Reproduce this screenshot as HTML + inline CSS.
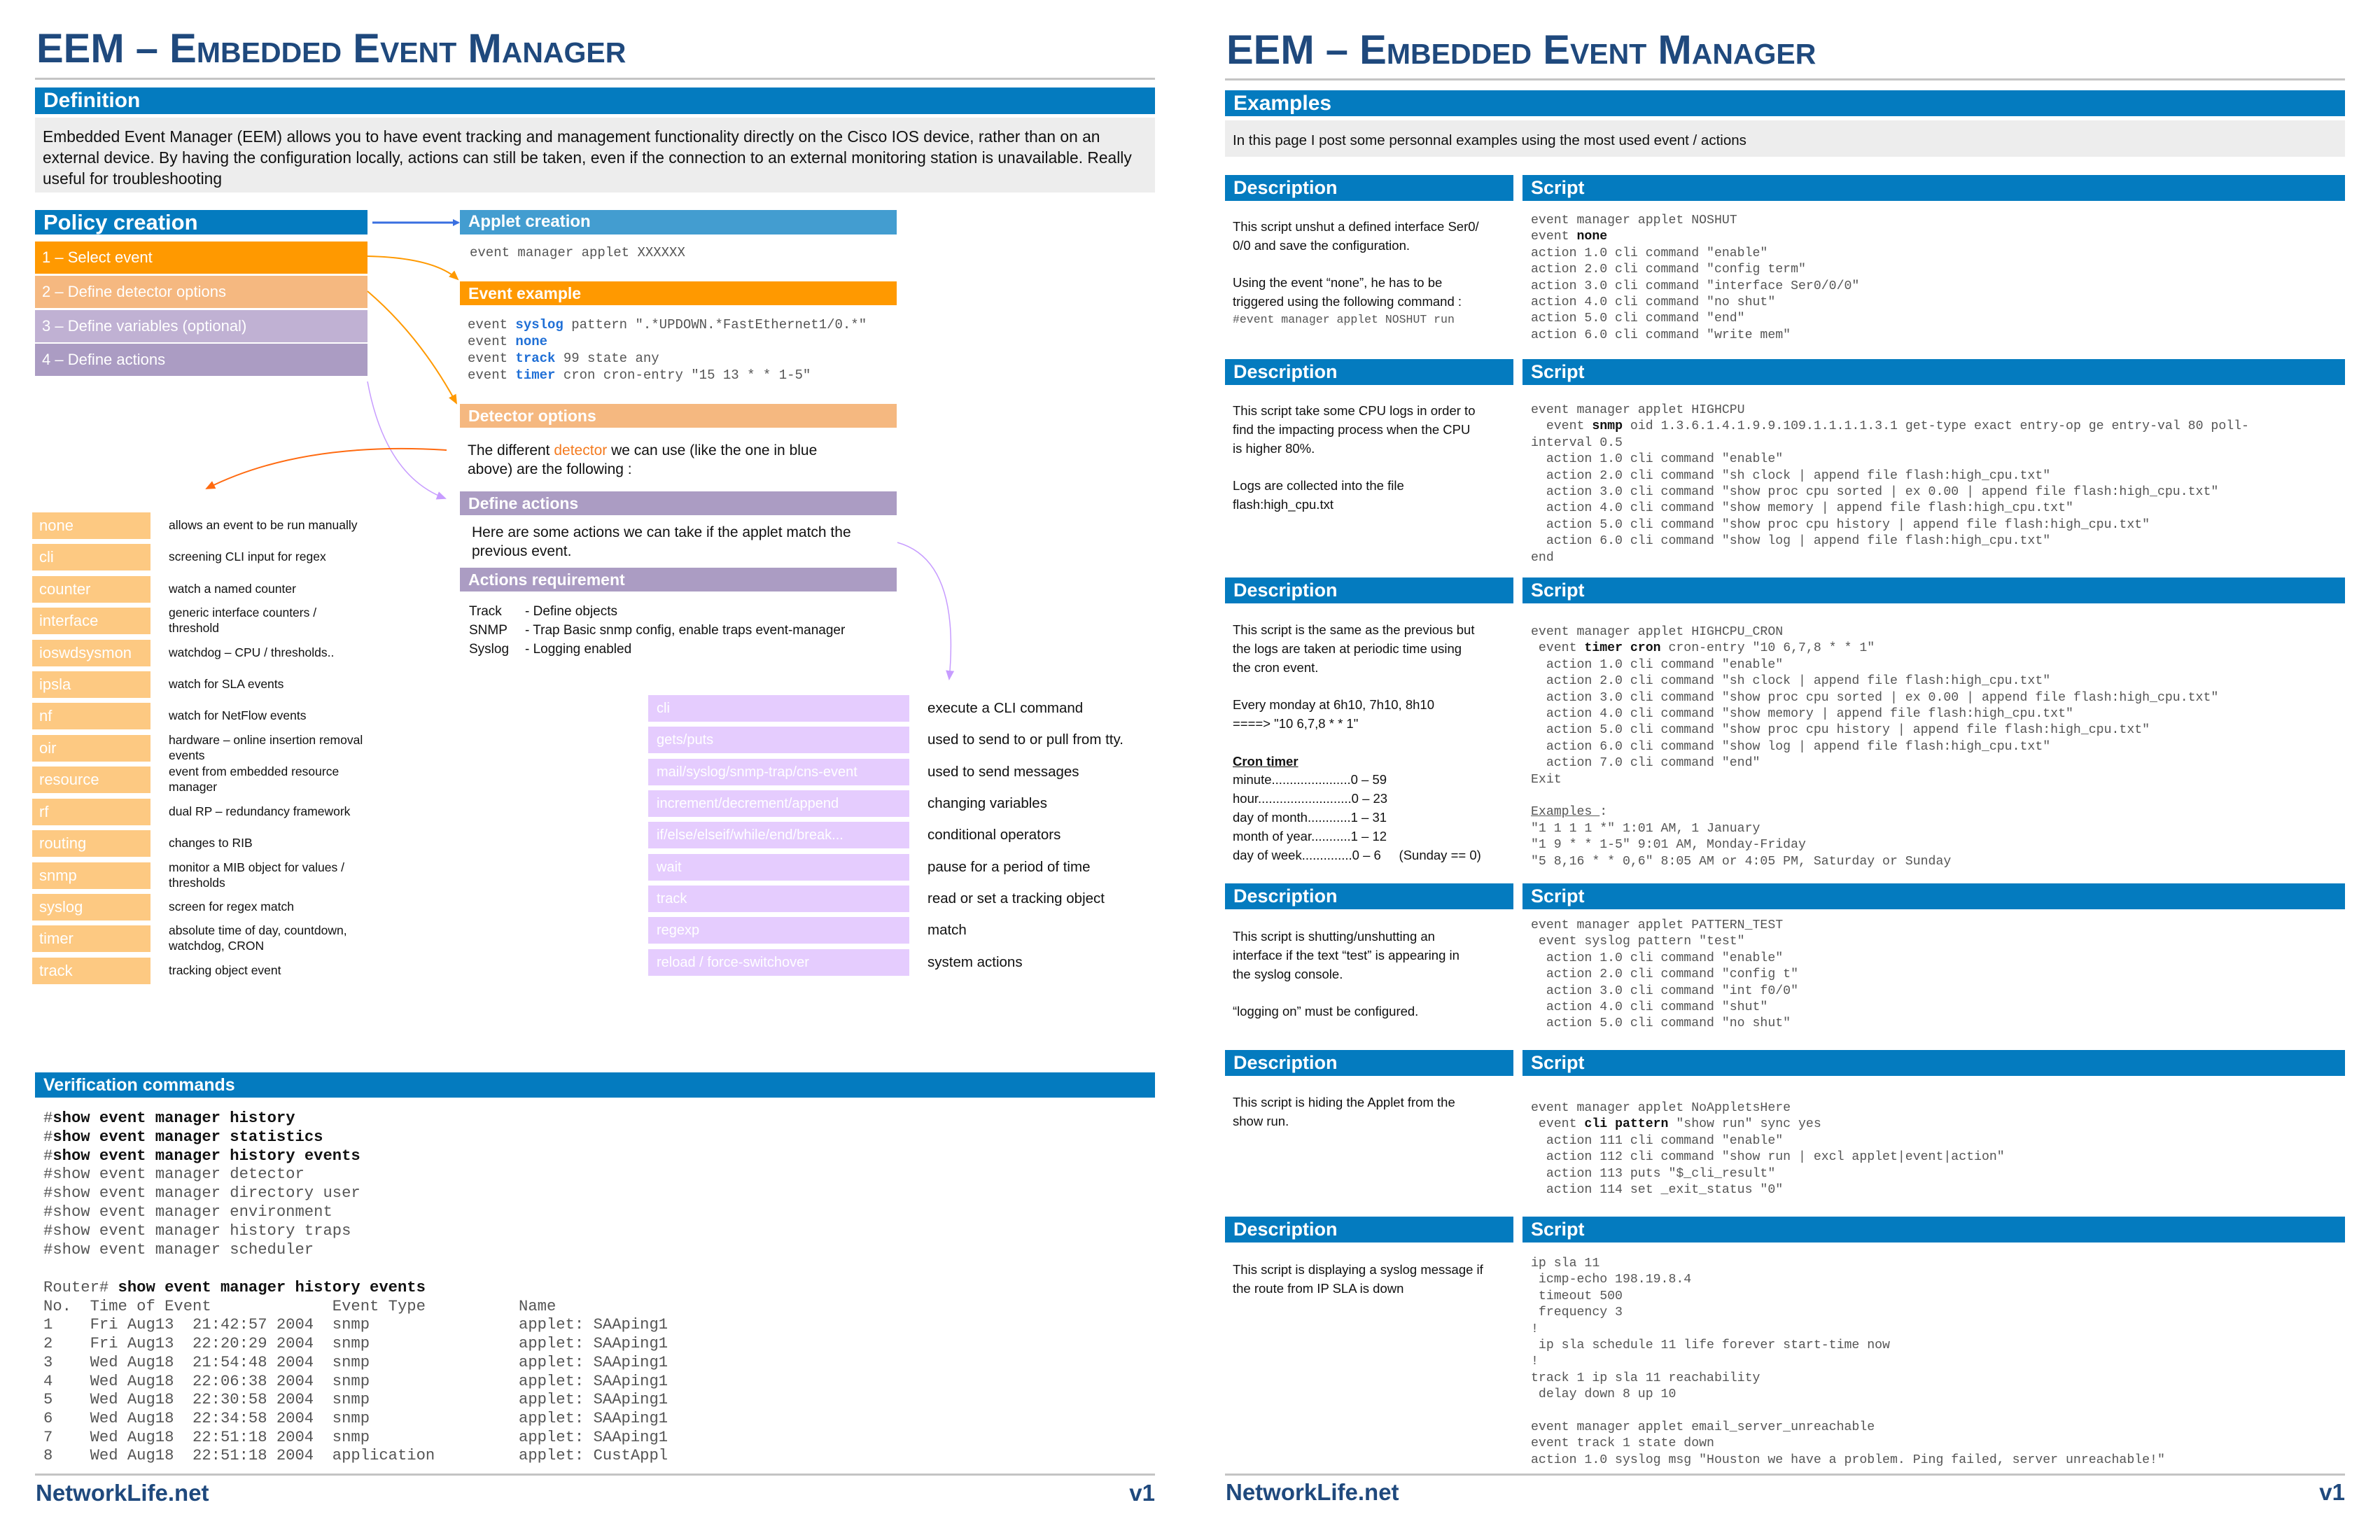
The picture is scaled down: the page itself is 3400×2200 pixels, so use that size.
<!DOCTYPE html>
<html><head><meta charset="utf-8"><style>
*{margin:0;padding:0;box-sizing:border-box}
body{width:3400px;height:2200px;background:#fff;position:relative;overflow:hidden;font-family:"Liberation Sans",sans-serif;color:#111}
.a{position:absolute;white-space:pre}
.t{position:absolute;font-size:58px;font-weight:bold;color:#1f497d;font-variant:small-caps;line-height:64px;white-space:nowrap}
.rule{position:absolute;height:3px;background:#c4c4c4}
.bar{position:absolute;background:#047bbf;color:#fff;font-weight:bold;font-size:27px;padding-left:12px;white-space:nowrap}
.sub{position:absolute;color:#fff;font-weight:bold;font-size:23px;padding-left:12px;white-space:nowrap;line-height:34px;height:34px}
.grey{position:absolute;background:#ededed}
.m{font-family:"Liberation Mono",monospace;color:#555;position:absolute;white-space:pre}
.kb{color:#1f6fd6;font-weight:bold}
.bk{color:#111;font-weight:bold}
.ev{position:absolute;left:46px;width:169px;height:38px;background:#fdc982;color:#fff;font-size:22px;line-height:38px;padding-left:10px}
.evd{position:absolute;left:241px;font-size:17.5px;line-height:22px;color:#111}
.ac{position:absolute;left:926px;width:373px;height:38px;background:#e5ccfe;color:#fff;font-size:20px;line-height:38px;padding-left:12px;white-space:nowrap}
.acd{position:absolute;left:1325px;font-size:20.5px;color:#111;white-space:nowrap}
.step{position:absolute;left:50px;width:475px;height:46px;color:#fff;font-size:22px;line-height:46px;padding-left:10px}
.d{position:absolute;left:1761px;font-size:18.5px;line-height:26.8px;white-space:pre;color:#111}
.s{position:absolute;left:2187px;font-family:"Liberation Mono",monospace;font-size:18.2px;line-height:23.4px;white-space:pre;color:#555}
.foot{position:absolute;font-size:33px;font-weight:bold;color:#1f497d;line-height:40px}
</style></head><body>

<!-- LEFT PAGE -->
<div class="t" style="left:52px;top:38px">EEM – Embedded Event Manager</div>
<div class="rule" style="left:50px;top:111px;width:1600px"></div>
<div class="bar" style="left:50px;top:125px;width:1600px;height:38px;line-height:38px;font-size:30px">Definition</div>
<div class="grey" style="left:50px;top:168px;width:1600px;height:107px"></div>
<div class="a" style="left:61px;top:180px;font-size:22.8px;line-height:30px">Embedded Event Manager (EEM) allows you to have event tracking and management functionality directly on the Cisco IOS device, rather than on an
external device. By having the configuration locally, actions can still be taken, even if the connection to an external monitoring station is unavailable. Really
useful for troubleshooting</div>

<div class="bar" style="left:50px;top:300px;width:475px;height:35px;line-height:35px;font-size:31px">Policy creation</div>
<div class="step" style="top:345px;background:#ff9900">1 – Select event</div>
<div class="step" style="top:394px;background:#f5b880">2 – Define detector options</div>
<div class="step" style="top:443px;background:#c0b1d3">3 – Define variables (optional)</div>
<div class="step" style="top:491px;background:#ab9cc3">4 – Define actions</div>

<div class="sub" style="left:657px;top:300px;width:624px;height:35px;background:#439dd0;font-size:24px">Applet creation</div>
<div class="m" style="left:671px;top:350px;font-size:19px;line-height:22px">event manager applet XXXXXX</div>
<div class="sub" style="left:657px;top:402px;width:624px;background:#ff9900">Event example</div>
<div class="m" style="left:668px;top:452px;font-size:19px;line-height:24px">event <span class="kb">syslog</span> pattern ".*UPDOWN.*FastEthernet1/0.*"
event <span class="kb">none</span>
event <span class="kb">track</span> 99 state any
event <span class="kb">timer</span> cron cron-entry "15 13 * * 1-5"</div>
<div class="sub" style="left:657px;top:577px;width:624px;background:#f5b880">Detector options</div>
<div class="a" style="left:668px;top:630px;font-size:21px;line-height:27px">The different <span style="color:#f47b20">detector</span> we can use (like the one in blue
above) are the following :</div>
<div class="sub" style="left:657px;top:702px;width:624px;background:#ab9cc3">Define actions</div>
<div class="a" style="left:674px;top:747px;font-size:21px;line-height:27px">Here are some actions we can take if the applet match the
previous event.</div>
<div class="sub" style="left:657px;top:811px;width:624px;background:#ab9cc3">Actions requirement</div>
<div class="a" style="left:670px;top:860px;font-size:19px;line-height:27px">Track
SNMP
Syslog</div>
<div class="a" style="left:750px;top:860px;font-size:19px;line-height:27px">- Define objects
- Trap Basic snmp config, enable traps event-manager
- Logging enabled</div>

<div class="ev" style="top:732px">none</div><div class="evd" style="top:739px">allows an event to be run manually</div>
<div class="ev" style="top:777px">cli</div><div class="evd" style="top:784px">screening CLI input for regex</div>
<div class="ev" style="top:823px">counter</div><div class="evd" style="top:830px">watch a named counter</div>
<div class="ev" style="top:868px">interface</div><div class="evd" style="top:864px">generic interface counters /<br>threshold</div>
<div class="ev" style="top:914px">ioswdsysmon</div><div class="evd" style="top:921px">watchdog – CPU / thresholds..</div>
<div class="ev" style="top:959px">ipsla</div><div class="evd" style="top:966px">watch for SLA events</div>
<div class="ev" style="top:1004px">nf</div><div class="evd" style="top:1011px">watch for NetFlow events</div>
<div class="ev" style="top:1050px">oir</div><div class="evd" style="top:1046px">hardware – online insertion removal<br>events</div>
<div class="ev" style="top:1095px">resource</div><div class="evd" style="top:1091px">event from embedded resource<br>manager</div>
<div class="ev" style="top:1141px">rf</div><div class="evd" style="top:1148px">dual RP – redundancy framework</div>
<div class="ev" style="top:1186px">routing</div><div class="evd" style="top:1193px">changes to RIB</div>
<div class="ev" style="top:1232px">snmp</div><div class="evd" style="top:1228px">monitor a MIB object for values /<br>thresholds</div>
<div class="ev" style="top:1277px">syslog</div><div class="evd" style="top:1284px">screen for regex match</div>
<div class="ev" style="top:1322px">timer</div><div class="evd" style="top:1318px">absolute time of day, countdown,<br>watchdog, CRON</div>
<div class="ev" style="top:1368px">track</div><div class="evd" style="top:1375px">tracking object event</div>

<div class="ac" style="top:993px">cli</div><div class="acd" style="top:1000px">execute a CLI command</div>
<div class="ac" style="top:1038px">gets/puts</div><div class="acd" style="top:1045px">used to send to or pull from tty.</div>
<div class="ac" style="top:1084px">mail/syslog/snmp-trap/cns-event</div><div class="acd" style="top:1091px">used to send messages</div>
<div class="ac" style="top:1129px">increment/decrement/append</div><div class="acd" style="top:1136px">changing variables</div>
<div class="ac" style="top:1174px">if/else/elseif/while/end/break...</div><div class="acd" style="top:1181px">conditional operators</div>
<div class="ac" style="top:1220px">wait</div><div class="acd" style="top:1227px">pause for a period of time</div>
<div class="ac" style="top:1265px">track</div><div class="acd" style="top:1272px">read or set a tracking object</div>
<div class="ac" style="top:1310px">regexp</div><div class="acd" style="top:1317px">match</div>
<div class="ac" style="top:1356px">reload / force-switchover</div><div class="acd" style="top:1363px">system actions</div>

<svg style="position:absolute;left:0;top:0" width="1700" height="1100">
<defs>
<marker id="ab" markerWidth="10" markerHeight="10" refX="8" refY="5" orient="auto" markerUnits="userSpaceOnUse"><path d="M0,0 L10,5 L0,10 z" fill="#3a6fe0"/></marker>
<marker id="ao" markerWidth="14" markerHeight="14" refX="12" refY="7" orient="auto" markerUnits="userSpaceOnUse"><path d="M0,1 L14,7 L0,13 z" fill="#ff9900"/></marker>
<marker id="ar" markerWidth="14" markerHeight="14" refX="12" refY="7" orient="auto" markerUnits="userSpaceOnUse"><path d="M0,1 L14,7 L0,13 z" fill="#ff6a10"/></marker>
<marker id="ap" markerWidth="14" markerHeight="14" refX="12" refY="7" orient="auto" markerUnits="userSpaceOnUse"><path d="M0,1 L14,7 L0,13 z" fill="#c79cff"/></marker>
</defs>
<path d="M532,318 L655,318" stroke="#3a6fe0" stroke-width="3" fill="none" marker-end="url(#ab)"/>
<path d="M525,366 Q620,368 654,399" stroke="#ff9900" stroke-width="2" fill="none" marker-end="url(#ao)"/>
<path d="M525,416 Q600,480 652,576" stroke="#ff9900" stroke-width="2" fill="none" marker-end="url(#ao)"/>
<path d="M525,545 Q550,680 636,712" stroke="#c79cff" stroke-width="1.5" fill="none" marker-end="url(#ap)"/>
<path d="M638,643 Q430,630 295,698" stroke="#ff6a10" stroke-width="2" fill="none" marker-end="url(#ar)"/>
<path d="M1282,775 Q1372,800 1356,970" stroke="#c79cff" stroke-width="1.5" fill="none" marker-end="url(#ap)"/>
</svg>

<div class="bar" style="left:50px;top:1532px;width:1600px;height:36px;line-height:36px;font-size:25px">Verification commands</div>
<div class="m" style="left:62px;top:1585px;font-size:22.2px;line-height:26.8px">#<span class="bk">show event manager history</span>
#<span class="bk">show event manager statistics</span>
#<span class="bk">show event manager history events</span>
#show event manager detector
#show event manager directory user
#show event manager environment
#show event manager history traps
#show event manager scheduler</div>
<div class="m" style="left:62px;top:1827px;font-size:22.2px;line-height:26.7px">Router# <span class="bk">show event manager history events</span>
No.  Time of Event             Event Type          Name
1    Fri Aug13  21:42:57 2004  snmp                applet: SAAping1
2    Fri Aug13  22:20:29 2004  snmp                applet: SAAping1
3    Wed Aug18  21:54:48 2004  snmp                applet: SAAping1
4    Wed Aug18  22:06:38 2004  snmp                applet: SAAping1
5    Wed Aug18  22:30:58 2004  snmp                applet: SAAping1
6    Wed Aug18  22:34:58 2004  snmp                applet: SAAping1
7    Wed Aug18  22:51:18 2004  snmp                applet: SAAping1
8    Wed Aug18  22:51:18 2004  application         applet: CustAppl</div>
<div class="rule" style="left:50px;top:2105px;width:1600px"></div>
<div class="foot" style="left:51px;top:2113px">NetworkLife.net</div>
<div class="foot" style="left:1590px;top:2113px;width:60px;text-align:right">v1</div>

<!-- RIGHT PAGE -->
<div class="t" style="left:1752px;top:40px">EEM – Embedded Event Manager</div>
<div class="rule" style="left:1750px;top:112px;width:1600px"></div>
<div class="bar" style="left:1750px;top:129px;width:1600px;height:37px;line-height:37px;font-size:30px">Examples</div>
<div class="grey" style="left:1750px;top:172px;width:1600px;height:52px"></div>
<div class="a" style="left:1761px;top:188px;font-size:20.5px;line-height:26px">In this page I post some personnal examples using the most used event / actions</div>

<div class="bar" style="left:1750px;top:250px;width:412px;height:37px;line-height:37px">Description</div>
<div class="bar" style="left:2175px;top:250px;width:1175px;height:37px;line-height:37px">Script</div>
<div class="d" style="top:311px">This script unshut a defined interface Ser0/
0/0 and save the configuration.

Using the event “none”, he has to be
triggered using the following command :</div>
<div class="m" style="left:1761px;top:446px;font-size:16.5px;line-height:22px">#event manager applet NOSHUT run</div>
<div class="s" style="top:304px">event manager applet NOSHUT
event <span class="bk">none</span>
action 1.0 cli command "enable"
action 2.0 cli command "config term"
action 3.0 cli command "interface Ser0/0/0"
action 4.0 cli command "no shut"
action 5.0 cli command "end"
action 6.0 cli command "write mem"</div>

<div class="bar" style="left:1750px;top:513px;width:412px;height:37px;line-height:37px">Description</div>
<div class="bar" style="left:2175px;top:513px;width:1175px;height:37px;line-height:37px">Script</div>
<div class="d" style="top:574px">This script take some CPU logs in order to
find the impacting process when the CPU
is higher 80%.

Logs are collected into the file
flash:high_cpu.txt</div>
<div class="s" style="top:575px">event manager applet HIGHCPU
  event <span class="bk">snmp</span> oid 1.3.6.1.4.1.9.9.109.1.1.1.1.3.1 get-type exact entry-op ge entry-val 80 poll-
interval 0.5
  action 1.0 cli command "enable"
  action 2.0 cli command "sh clock | append file flash:high_cpu.txt"
  action 3.0 cli command "show proc cpu sorted | ex 0.00 | append file flash:high_cpu.txt"
  action 4.0 cli command "show memory | append file flash:high_cpu.txt"
  action 5.0 cli command "show proc cpu history | append file flash:high_cpu.txt"
  action 6.0 cli command "show log | append file flash:high_cpu.txt"
end</div>

<div class="bar" style="left:1750px;top:825px;width:412px;height:37px;line-height:37px">Description</div>
<div class="bar" style="left:2175px;top:825px;width:1175px;height:37px;line-height:37px">Script</div>
<div class="d" style="top:887px">This script is the same as the previous but
the logs are taken at periodic time using
the cron event.

Every monday at 6h10, 7h10, 8h10
====&gt; "10 6,7,8 * * 1"

<b style="text-decoration:underline">Cron timer</b>
minute......................0 – 59
hour..........................0 – 23
day of month............1 – 31
month of year...........1 – 12
day of week..............0 – 6     (Sunday == 0)</div>
<div class="s" style="top:892px">event manager applet HIGHCPU_CRON
 event <span class="bk">timer cron</span> cron-entry "10 6,7,8 * * 1"
  action 1.0 cli command "enable"
  action 2.0 cli command "sh clock | append file flash:high_cpu.txt"
  action 3.0 cli command "show proc cpu sorted | ex 0.00 | append file flash:high_cpu.txt"
  action 4.0 cli command "show memory | append file flash:high_cpu.txt"
  action 5.0 cli command "show proc cpu history | append file flash:high_cpu.txt"
  action 6.0 cli command "show log | append file flash:high_cpu.txt"
  action 7.0 cli command "end"
Exit

<u>Examples </u>:
"1 1 1 1 *" 1:01 AM, 1 January
"1 9 * * 1-5" 9:01 AM, Monday-Friday
"5 8,16 * * 0,6" 8:05 AM or 4:05 PM, Saturday or Sunday</div>

<div class="bar" style="left:1750px;top:1262px;width:412px;height:37px;line-height:37px">Description</div>
<div class="bar" style="left:2175px;top:1262px;width:1175px;height:37px;line-height:37px">Script</div>
<div class="d" style="top:1325px">This script is shutting/unshutting an
interface if the text “test” is appearing in
the syslog console.

“logging on” must be configured.</div>
<div class="s" style="top:1311px">event manager applet PATTERN_TEST
 event syslog pattern "test"
  action 1.0 cli command "enable"
  action 2.0 cli command "config t"
  action 3.0 cli command "int f0/0"
  action 4.0 cli command "shut"
  action 5.0 cli command "no shut"</div>

<div class="bar" style="left:1750px;top:1500px;width:412px;height:37px;line-height:37px">Description</div>
<div class="bar" style="left:2175px;top:1500px;width:1175px;height:37px;line-height:37px">Script</div>
<div class="d" style="top:1562px">This script is hiding the Applet from the
show run.</div>
<div class="s" style="top:1572px">event manager applet NoAppletsHere
 event <span class="bk">cli pattern</span> "show run" sync yes
  action 111 cli command "enable"
  action 112 cli command "show run | excl applet|event|action"
  action 113 puts "$_cli_result"
  action 114 set _exit_status "0"</div>

<div class="bar" style="left:1750px;top:1738px;width:412px;height:37px;line-height:37px">Description</div>
<div class="bar" style="left:2175px;top:1738px;width:1175px;height:37px;line-height:37px">Script</div>
<div class="d" style="top:1801px">This script is displaying a syslog message if
the route from IP SLA is down</div>
<div class="s" style="top:1794px">ip sla 11
 icmp-echo 198.19.8.4
 timeout 500
 frequency 3
!
 ip sla schedule 11 life forever start-time now
!
track 1 ip sla 11 reachability
 delay down 8 up 10

event manager applet email_server_unreachable
event track 1 state down
action 1.0 syslog msg "Houston we have a problem. Ping failed, server unreachable!"</div>
<div class="rule" style="left:1750px;top:2105px;width:1600px"></div>
<div class="foot" style="left:1751px;top:2112px">NetworkLife.net</div>
<div class="foot" style="left:3290px;top:2112px;width:60px;text-align:right">v1</div>
</body></html>
